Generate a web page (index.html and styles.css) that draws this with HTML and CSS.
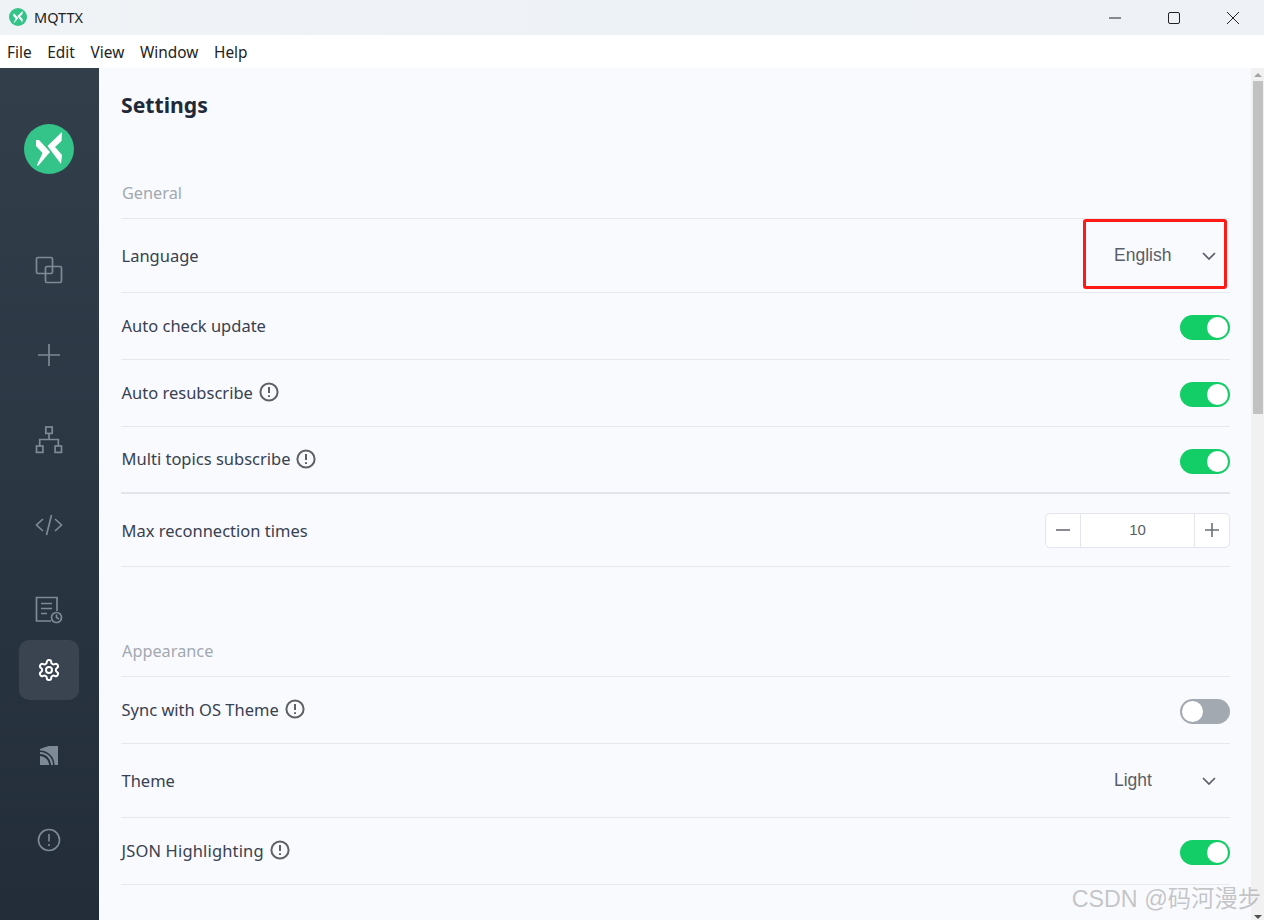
FILE: index.html
```html
<!DOCTYPE html>
<html lang="en">
<head>
<meta charset="utf-8">
<title>MQTTX</title>
<link rel="stylesheet" href="styles.css">
</head>
<body>
<div class="app">
  <header class="titlebar">
    <div class="title-left">
      <svg class="app-icon" viewBox="0 0 50 50"><circle cx="25" cy="25" r="25" fill="#34c388"/><path d="M38 8L37.5 17L31 23L38 31L37 40L23.5 22ZM12 16L15 16L26 28L14 42L13 41L18.5 29L12 22Z" fill="#fff"/></svg>
      <span class="app-name">MQTTX</span>
    </div>
    <div class="win-controls">
      <svg class="win-btn" viewBox="0 0 12 12"><path d="M0 6H12" stroke="#222" stroke-width="1" fill="none"/></svg>
      <svg class="win-btn" viewBox="0 0 12 12"><rect x=".5" y=".5" width="11" height="11" rx="1.5" stroke="#222" stroke-width="1" fill="none"/></svg>
      <svg class="win-btn" viewBox="0 0 12 12"><path d="M0 0L12 12M12 0L0 12" stroke="#222" stroke-width="1" fill="none"/></svg>
    </div>
  </header>
  <nav class="menubar">
    <span>File</span><span>Edit</span><span>View</span><span>Window</span><span>Help</span>
  </nav>
  <div class="main">
    <aside class="sidebar">
      <svg class="logo" viewBox="0 0 50 50"><circle cx="25" cy="25" r="25" fill="#34c388"/><path d="M38 8L37.5 17L31 23L38 31L37 40L23.5 22ZM12 16L15 16L26 28L14 42L13 41L18.5 29L12 22Z" fill="#fff"/></svg>
      <div class="nav-item">
        <svg viewBox="0 0 28 28" class="ico"><rect x="1.5" y="1.5" width="16" height="16" rx="1.5"/><rect x="10.5" y="10.5" width="16" height="16" rx="1.5"/></svg>
      </div>
      <div class="nav-item">
        <svg viewBox="0 0 28 28" class="ico"><path d="M14 3V25M3 14H25"/></svg>
      </div>
      <div class="nav-item">
        <svg viewBox="0 0 28 28" class="ico"><rect x="10.8" y="1" width="6.4" height="6.4"/><rect x="1.5" y="20" width="6.4" height="6.4"/><rect x="20.1" y="20" width="6.4" height="6.4"/><path d="M14 7.4V13.5M4.7 20V13.5H23.3V20"/></svg>
      </div>
      <div class="nav-item">
        <svg viewBox="0 0 28 28" class="ico"><path d="M8 8L1.5 14L8 20M20 8L26.5 14L20 20M16.5 4L11.5 24"/></svg>
      </div>
      <div class="nav-item nav-tight">
        <svg viewBox="0 0 28 28" class="ico"><path d="M16 25H1.5V1.5H22V15"/><path d="M6 7.5H17M6 12.5H17M6 17.5H12"/><circle cx="21.5" cy="21.5" r="5"/><path d="M21.5 18.5V21.5L24 23"/></svg>
      </div>
      <div class="nav-item nav-active">
        <svg viewBox="0 0 24 24" class="ico ico-active"><path d="M12.22 2h-.44a2 2 0 0 0-2 2v.18a2 2 0 0 1-1 1.73l-.43.25a2 2 0 0 1-2 0l-.15-.08a2 2 0 0 0-2.73.73l-.22.38a2 2 0 0 0 .73 2.73l.15.1a2 2 0 0 1 1 1.72v.51a2 2 0 0 1-1 1.74l-.15.09a2 2 0 0 0-.73 2.73l.22.38a2 2 0 0 0 2.73.73l.15-.08a2 2 0 0 1 2 0l.43.25a2 2 0 0 1 1 1.73V20a2 2 0 0 0 2 2h.44a2 2 0 0 0 2-2v-.18a2 2 0 0 1 1-1.73l.43-.25a2 2 0 0 1 2 0l.15.08a2 2 0 0 0 2.73-.73l.22-.39a2 2 0 0 0-.73-2.73l-.15-.08a2 2 0 0 1-1-1.74v-.5a2 2 0 0 1 1-1.74l.15-.09a2 2 0 0 0 .73-2.73l-.22-.38a2 2 0 0 0-2.73-.73l-.15.08a2 2 0 0 1-2 0l-.43-.25a2 2 0 0 1-1-1.73V4a2 2 0 0 0-2-2z"/><circle cx="12" cy="12" r="3"/></svg>
      </div>
      <div class="nav-item">
        <svg viewBox="0 0 18 19" class="ico-fill"><path d="M0 10A9 9 0 0 1 9 19H0Z"/><path d="M0 6A13 13 0 0 1 13 19H11A11 11 0 0 0 0 8Z"/><path d="M0 3Q5 1 9 0H18V19H14.5A14.5 14.5 0 0 0 0 4.5Z"/></svg>
      </div>
      <div class="nav-item">
        <svg viewBox="0 0 24 24" class="ico ico-about"><circle cx="12" cy="12" r="10.5"/><path d="M12 6V13.5M12 16V18"/></svg>
      </div>
    </aside>
    <main class="content">
      <h1 class="page-title">Settings</h1>

      <h2 class="section-title">General</h2>
      <section class="group">
        <div class="row row-tall row-select">
          <span class="label">Language</span>
          <div class="select"><span>English</span><svg viewBox="0 0 14 8" class="chev"><path d="M1 1L7 7L13 1"/></svg></div>
          <div class="annotation"></div>
        </div>
        <div class="row">
          <span class="label">Auto check update</span>
          <div class="switch on"><i></i></div>
        </div>
        <div class="row">
          <span class="label">Auto resubscribe<svg viewBox="0 0 20 20" class="info"><circle cx="10" cy="10" r="8.6"/><path d="M10 5V11M10 13.2V15"/></svg></span>
          <div class="switch on"><i></i></div>
        </div>
        <div class="row row-strong">
          <span class="label">Multi topics subscribe<svg viewBox="0 0 20 20" class="info"><circle cx="10" cy="10" r="8.6"/><path d="M10 5V11M10 13.2V15"/></svg></span>
          <div class="switch on"><i></i></div>
        </div>
        <div class="row row-num">
          <span class="label">Max reconnection times</span>
          <div class="number">
            <span class="num-btn"><svg viewBox="0 0 14 14" class="num-ico"><path d="M0 7H14"/></svg></span>
            <span class="num-val">10</span>
            <span class="num-btn num-plus"><svg viewBox="0 0 14 14" class="num-ico"><path d="M0 7H14M7 0V14"/></svg></span>
          </div>
        </div>
      </section>

      <h2 class="section-title section-gap">Appearance</h2>
      <section class="group">
        <div class="row">
          <span class="label">Sync with OS Theme<svg viewBox="0 0 20 20" class="info"><circle cx="10" cy="10" r="8.6"/><path d="M10 5V11M10 13.2V15"/></svg></span>
          <div class="switch off"><i></i></div>
        </div>
        <div class="row row-tall row-select">
          <span class="label">Theme</span>
          <div class="select select-light"><span>Light</span><svg viewBox="0 0 14 8" class="chev"><path d="M1 1L7 7L13 1"/></svg></div>
        </div>
        <div class="row">
          <span class="label label-json">JSON Highlighting<svg viewBox="0 0 20 20" class="info"><circle cx="10" cy="10" r="8.6"/><path d="M10 5V11M10 13.2V15"/></svg></span>
          <div class="switch on"><i></i></div>
        </div>
      </section>
    </main>
    <div class="scrollbar">
      <span class="arrow up"></span>
      <div class="thumb"></div>
      <span class="arrow down"></span>
    </div>
  </div>
  <div class="watermark">CSDN @码河漫步</div>
</div>
</body>
</html>
```
FILE: styles.css
```css
* { box-sizing: border-box; }
html, body { margin: 0; padding: 0; height: 100%; overflow: hidden; }
body { font-family: "Noto Sans", "Open Sans", sans-serif; background: #fff; }
.app { position: relative; width: 1264px; height: 920px; display: flex; flex-direction: column; overflow: hidden; }

.titlebar { height: 35px; flex: none; display: flex; justify-content: space-between; align-items: center; background: linear-gradient(90deg, #f0f3f6, #edf2f6 60%, #eef1f5); }
.title-left { display: flex; align-items: center; padding-left: 9px; padding-bottom: 2px; }
.app-icon { width: 18px; height: 18px; margin-right: 7px; }
.app-name { font-size: 14.5px; line-height: 18px; color: #222; }
.win-controls { display: flex; align-items: center; gap: 47px; padding-right: 25px; }
.win-btn { width: 12px; height: 12px; display: block; }

.menubar { height: 33px; flex: none; display: flex; align-items: center; gap: 15.7px; padding: 2px 0 0 7px; background: #fff; font-size: 15.4px; color: #222; }

.main { flex: 1; display: flex; min-height: 0; }

.sidebar { width: 99px; flex: none; display: flex; flex-direction: column; align-items: center; padding: 56px 1px 0 0; background: linear-gradient(180deg, #323f4b, #232d3a); }
.logo { width: 50px; height: 50px; flex: none; margin-bottom: 66px; }
.nav-item { width: 60px; height: 60px; flex: none; display: flex; align-items: center; justify-content: center; margin-bottom: 25px; border-radius: 10px; }
.nav-tight { margin-bottom: 0; }
.nav-active { background: #3a4451; }
.ico { width: 28px; height: 28px; fill: none; stroke: #7e8a96; stroke-width: 1.7; }
.ico-active { width: 24px; height: 24px; stroke: #fff; stroke-width: 2; }
.ico-about { width: 24px; height: 24px; stroke-width: 1.6; }
.ico-fill { width: 18px; height: 19px; fill: #7e8a96; }

.content { flex: 1; min-width: 0; overflow: hidden; padding: 0 21px 0 22px; background: #f9fafe; }
.page-title { margin: 21px 0 0; font-size: 21.2px; line-height: 32px; font-weight: 700; color: #1f2937; }
.section-title { margin: 60px 0 0; padding-left: 1px; font-size: 16.3px; line-height: 24px; height: 37px; font-weight: 400; color: #a2a9b0; }
.section-gap { margin-top: 72px; }
.group { display: flex; flex-direction: column; border-top: 1px solid #e6e8ee; }

.row { position: relative; height: 67px; flex: none; display: flex; align-items: center; justify-content: space-between; border-bottom: 1px solid #e6e8ee; }
.row-tall { height: 74px; }
.row-num { height: 73px; }
.row-strong { border-bottom: 2px solid #e3e5ec; }
.label { display: inline-flex; align-items: center; padding: 0 0 2px .5px; font-size: 16.5px; color: #374150; }
.row-tall .label, .row-num .label { padding-bottom: 0; }
.label-json { letter-spacing: .16px; }
.info { width: 20px; height: 20px; margin-left: 6px; fill: none; stroke: #5d6166; stroke-width: 2; }

.switch { width: 50px; height: 25px; margin-top: 3px; border-radius: 13px; display: flex; padding: 2px; }
.switch i { width: 21px; height: 21px; border-radius: 50%; background: #fff; display: block; }
.switch.on { background: #13ce66; justify-content: flex-end; }
.switch.off { background: #a2a9b0; justify-content: flex-start; }

.select { width: 116px; display: flex; align-items: center; justify-content: space-between; padding-right: 14px; font-family: "Liberation Sans", Arial, sans-serif; font-size: 17.5px; color: #5a5e66; }
.chev { width: 14px; height: 8px; fill: none; stroke: #5a5e66; stroke-width: 1.7; }
.annotation { position: absolute; right: 3px; top: 0; width: 144px; height: 70px; border: 3px solid #ff1a16; border-radius: 3px; }

.number { width: 185px; height: 35px; display: flex; background: #fff; border: 1px solid #e3e6ee; border-radius: 5px; }
.num-btn { width: 35px; flex: none; display: flex; align-items: center; justify-content: center; border-right: 1px solid #e3e6ee; }
.num-plus { border-right: 0; border-left: 1px solid #e3e6ee; }
.num-ico { width: 14px; height: 14px; fill: none; stroke: #6b6f76; stroke-width: 1.6; }
.num-val { flex: 1; text-align: center; font-family: "Liberation Sans", Arial, sans-serif; font-size: 15px; line-height: 32px; color: #5a5e66; }

.scrollbar { width: 13px; flex: none; position: relative; display: flex; flex-direction: column; align-items: center; background: #f1f1f1; padding: 0 1px; }
.thumb { width: 10px; height: 333px; background: #c1c1c1; margin-top: 4px; }
.arrow { width: 0; height: 0; border-left: 4px solid transparent; border-right: 4px solid transparent; }
.arrow.up { border-bottom: 4px solid #a3a3a3; margin-top: 5px; }
.arrow.down { border-top: 4px solid #505050; position: absolute; bottom: 1px; }

.watermark { position: absolute; right: 3px; bottom: 6px; font-family: "Liberation Sans", "Noto Sans CJK SC", sans-serif; font-size: 23.3px; line-height: 30px; color: rgba(120,120,120,.42); }
```
